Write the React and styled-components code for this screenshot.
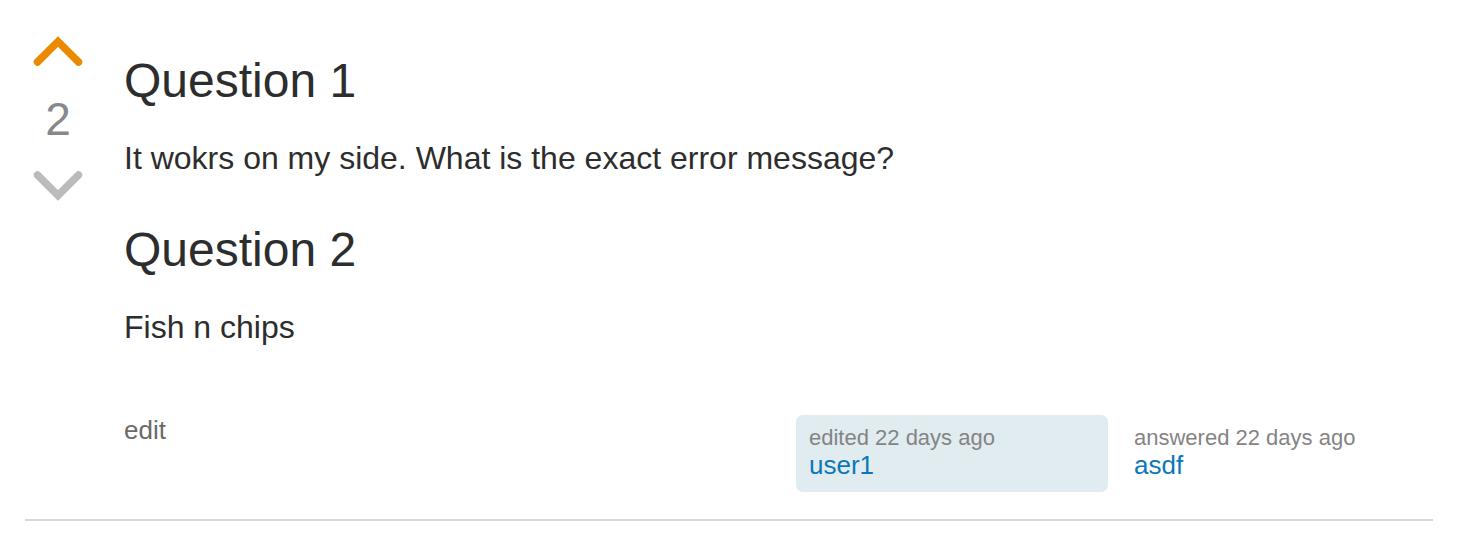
import React from 'react';
import styled, { createGlobalStyle } from 'styled-components';

// ------------------ DATA ------------------
const sections = [
  { title: 'Question 1', body: 'It wokrs on my side. What is the exact error message?' },
  { title: 'Question 2', body: 'Fish n chips' },
];

// ------------------ ICONS ------------------
const Chevron = ({ up, color }) => (
  <svg width='50' height='30' viewBox='0 0 50 30' overflow='visible'>
    <polyline
      points={up ? '4.5,26 25,5.5 45.5,26' : '4.5,4 25,24.5 45.5,4'}
      fill='none'
      stroke={color}
      strokeWidth='7.5'
      strokeLinecap='round'
      strokeLinejoin='miter'
    />
  </svg>
);

// ------------------ COMPONENT ------------------
const App = () => {
  return (
    <>
      <GlobalStyle />
      <Answer>
        <VoteCell>
          <VoteButton aria-label='up vote'>
            <Chevron up color='#e98a00' />
          </VoteButton>
          <VoteCount>2</VoteCount>
          <VoteButton aria-label='down vote'>
            <Chevron color='#bbbbbb' />
          </VoteButton>
        </VoteCell>

        <PostCell>
          {sections.map((s, index) => (
            <React.Fragment key={index}>
              <Heading>{s.title}</Heading>
              <Paragraph>{s.body}</Paragraph>
            </React.Fragment>
          ))}

          <SignatureRow>
            <EditLink href='#'>edit</EditLink>
            <Signatures>
              <UserInfo $highlight>
                <Action>edited 22 days ago</Action>
                <UserName href='#'>user1</UserName>
              </UserInfo>
              <UserInfo>
                <Action>answered 22 days ago</Action>
                <UserName href='#'>asdf</UserName>
              </UserInfo>
            </Signatures>
          </SignatureRow>
        </PostCell>
      </Answer>
    </>
  );
};

// ------------------ STYLE ------------------
const GlobalStyle = createGlobalStyle`
  body {
    margin: 0;
    background: #fff;
    font-family: 'Liberation Sans', Arial, sans-serif;
    color: #2d2d2d;
  }
`;

const Answer = styled.div`
  display: flex;
  width: 1408px;
  margin-left: 25px;
  padding-top: 36px;
  padding-bottom: 27px;
  border-bottom: 2px solid #d6d9dc;
`;

const VoteCell = styled.div`
  width: 66px;
  margin-right: 33px;
  display: flex;
  flex-direction: column;
  align-items: center;
`;

const VoteButton = styled.button`
  display: block;
  padding: 0;
  margin: 0;
  border: none;
  background: transparent;
  cursor: pointer;
  line-height: 0;
`;

const VoteCount = styled.div`
  font-size: 46px;
  line-height: 52px;
  color: #888888;
  margin: 27px 0 26px;
`;

const PostCell = styled.div`
  flex: 1;
  padding-top: 18px;
`;

const Heading = styled.h1`
  margin: 0 0 29px;
  font-size: 48px;
  line-height: 53px;
  font-weight: 400;
  color: #2d2d2d;
`;

const Paragraph = styled.p`
  margin: 0 0 43px;
  font-size: 32px;
  line-height: 44px;
  color: #2d2d2d;

  &:last-of-type {
    margin-bottom: 66px;
  }
`;

const SignatureRow = styled.div`
  display: flex;
  align-items: flex-start;
  justify-content: space-between;
`;

const EditLink = styled.a`
  font-size: 26px;
  line-height: 30px;
  color: #6a6a6a;
  text-decoration: none;
`;

const Signatures = styled.div`
  display: flex;
  gap: 13px;
`;

const UserInfo = styled.div`
  box-sizing: border-box;
  width: 312px;
  padding: 11px 13px 12px;
  border-radius: 7px;
  background: ${(p) => (p.$highlight ? '#e1ecf0' : 'transparent')};
`;

const Action = styled.div`
  font-size: 22px;
  line-height: 24px;
  color: #848484;
`;

const UserName = styled.a`
  display: block;
  font-size: 26px;
  line-height: 30px;
  color: #0c77b8;
  text-decoration: none;
`;

// ------------------ EXPORT ------------------
export default App;
